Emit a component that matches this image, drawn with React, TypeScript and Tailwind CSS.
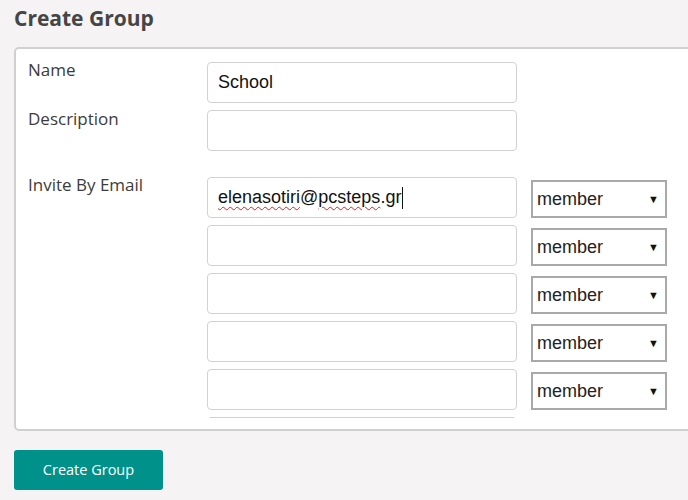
import React from 'react';

const ubuntuish = { fontFamily: '"Open Sans", "Noto Sans", sans-serif' };

function TextBox({ children }: { children?: React.ReactNode }) {
  return (
    <div className="h-[41px] w-[310px] shrink-0 rounded-[4px] border border-[#d2d2d2] bg-white pl-[10px] flex items-center text-[18px] text-[#111] font-['Liberation_Sans',Arial,sans-serif]">
      {children}
    </div>
  );
}

function RoleSelect() {
  return (
    <div className="mt-[3px] h-[38px] w-[136px] border-2 border-[#a9a9a9] bg-white flex items-center justify-between pl-[4px] pr-[6px] text-[18px] text-[#222] font-['Liberation_Sans',Arial,sans-serif]">
      <span>member</span>
      <span className="text-[11px] leading-none text-[#111]">▼</span>
    </div>
  );
}

const Squiggle: React.FC<{ children: React.ReactNode }> = ({ children }) => (
  <span className="underline decoration-wavy decoration-[#e02020] decoration-1 underline-offset-[3px]">
    {children}
  </span>
);

export default function App() {
  const emails = ['elenasotiri@pcsteps.gr', '', '', '', '', ''];

  return (
    <div className="w-[688px] h-[500px] overflow-hidden bg-[#f5f3f4]" style={ubuntuish}>
      {/* Title */}
      <h2 className="pl-[14px] pt-[3px] h-[47px] text-[21px] font-bold text-[#454545] leading-[30px]">
        Create Group
      </h2>

      {/* Form panel */}
      <div className="ml-[14px] w-[700px] h-[384px] rounded-[5px] border-2 border-[#d0d0d0] bg-white pt-[13px] pl-[12px]">
        {/* Name */}
        <div className="flex">
          <div className="w-[179px] text-[17px] leading-4 text-[#3c3c3c]">Name</div>
          <TextBox>School</TextBox>
        </div>

        {/* Description */}
        <div className="flex mt-[7px]">
          <div className="w-[179px] text-[17px] leading-4 text-[#3c3c3c] pt-[1px]">Description</div>
          <TextBox />
        </div>

        {/* Invite by email */}
        <div className="flex mt-[26px]">
          <div className="w-[179px] text-[17px] leading-4 text-[#3c3c3c]">Invite By Email</div>
          <div className="h-[241px] overflow-hidden flex flex-col gap-[7px]">
            {emails.map((e, i) => (
              <div key={i} className="flex gap-[14px]">
                <TextBox>
                  {i === 0 ? (
                    <span className="flex items-center">
                      <Squiggle>elenasotiri</Squiggle>@<Squiggle>pcsteps</Squiggle>.gr
                      <span className="ml-[1px] inline-block w-px h-[22px] bg-[#111]" />
                    </span>
                  ) : (
                    e
                  )}
                </TextBox>
                {i < 5 && <RoleSelect />}
              </div>
            ))}
          </div>
        </div>
      </div>

      {/* Submit */}
      <button className="ml-[14px] mt-[19px] h-[40px] w-[149px] rounded-[3px] bg-[#00928a] text-white text-[14.5px]">
        Create Group
      </button>
    </div>
  );
}
